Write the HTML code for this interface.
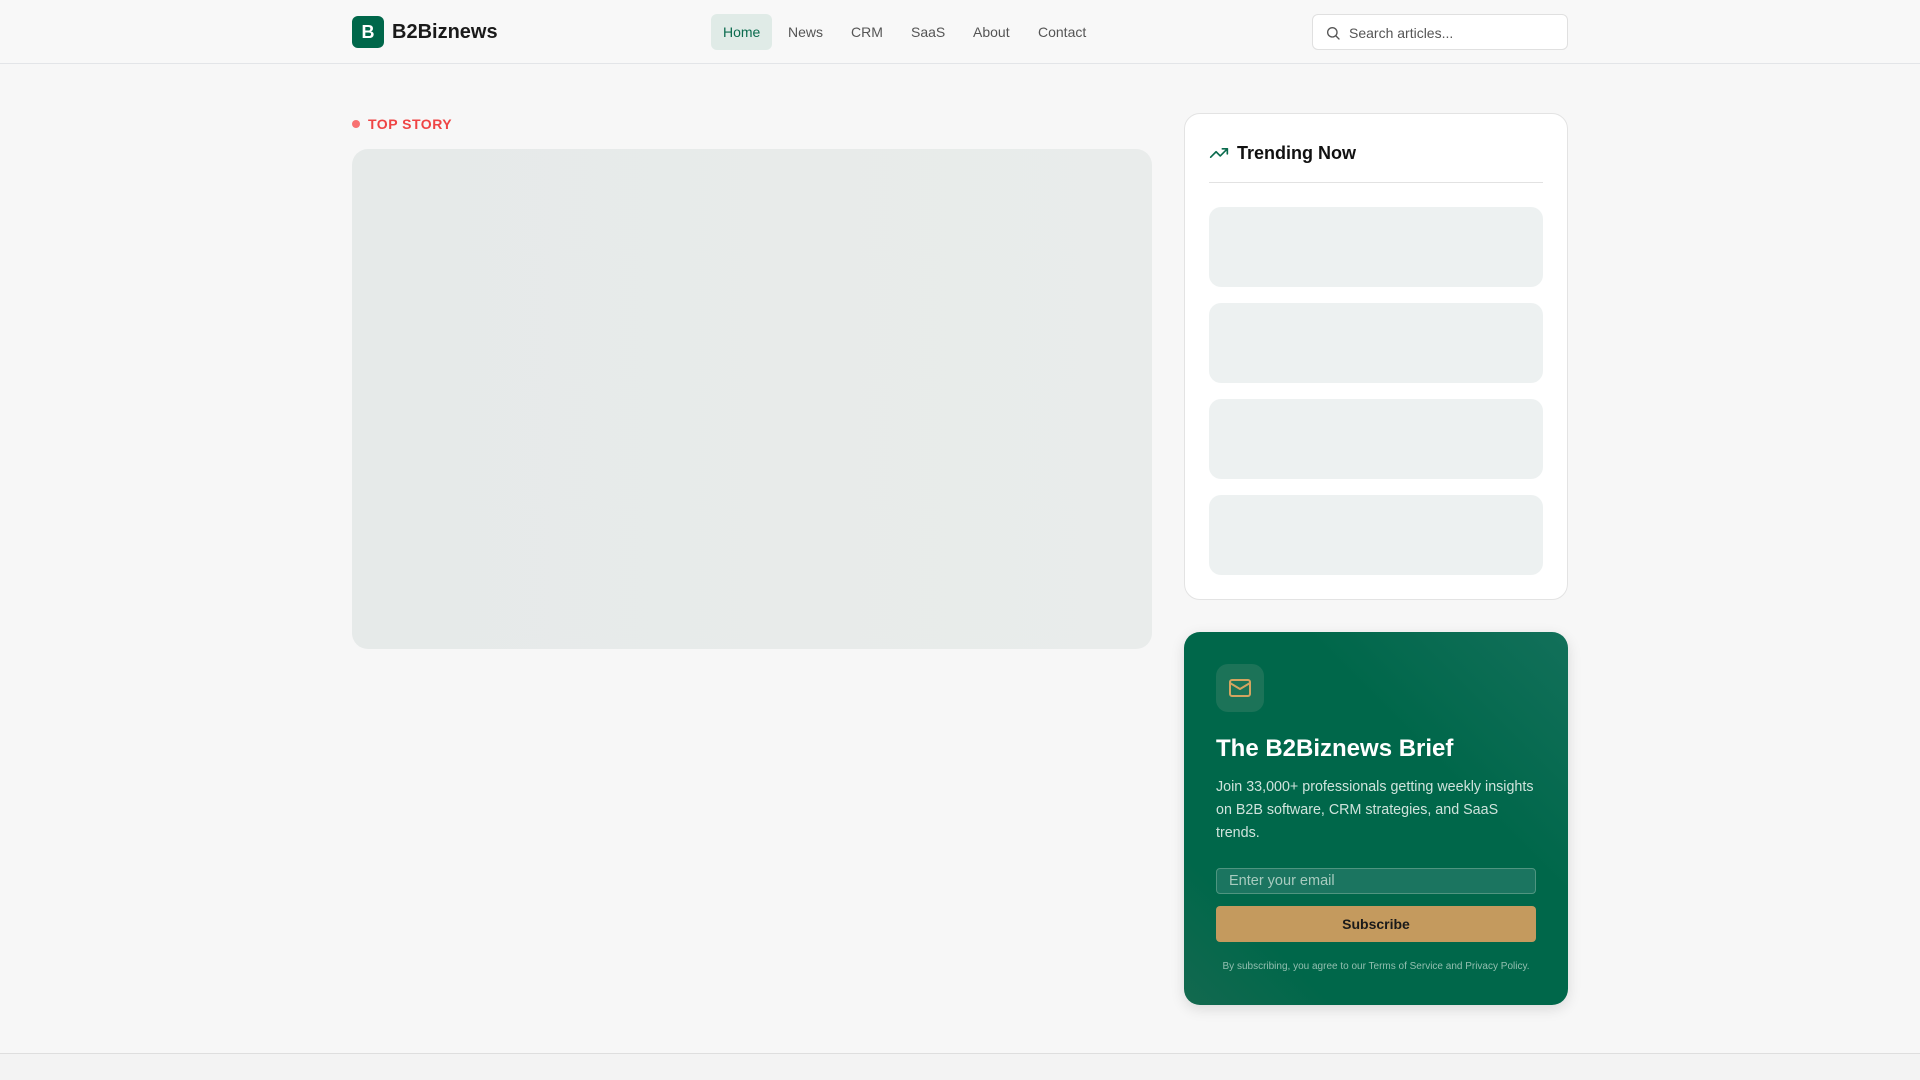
<!DOCTYPE html>
<html><head><meta charset="utf-8"><style>
*{box-sizing:border-box;margin:0;padding:0}
body{width:1920px;height:1080px;background:#f7f7f7;font-family:"Liberation Sans",sans-serif;position:relative;overflow:hidden}
.hdr{position:absolute;left:0;top:0;width:1920px;height:64px;border-bottom:1px solid #e3e5e8;background:#f8f8f8}
.logo{position:absolute;left:352px;top:16px;width:32px;height:32px;border-radius:6px;background:#00674a;color:#fff;font-weight:bold;font-size:18px;text-align:center;line-height:32px}
.brand{position:absolute;left:392px;top:21px;font-size:20px;font-weight:bold;color:#1a1a1a}
.nav a{position:absolute;top:14px;height:36px;line-height:36px;font-size:14px;color:#555;text-decoration:none}
.nav a.act{background:#e0ebe7;color:#0b6b4e;border-radius:6px;padding:0 12px}
.search{position:absolute;left:1312px;top:14px;width:256px;height:36px;border:1px solid #e0e0e0;background:#fff;border-radius:6px}
.search span{position:absolute;left:36px;top:10px;font-size:14px;color:#555}
.ts{position:absolute;left:352px;top:116px;font-size:14px;font-weight:bold;color:#ef4444;letter-spacing:.5px}
.ts i{display:inline-block;width:8px;height:8px;border-radius:50%;background:#f87171;margin-right:8px;vertical-align:1px}
.hero{position:absolute;left:352px;top:149px;width:800px;height:500px;border-radius:16px;background:linear-gradient(90deg,#e6eae9,#e9eceb)}
.trend{position:absolute;left:1184px;top:113px;width:384px;height:487px;background:#fff;border:1px solid #e3e3e3;border-radius:16px}
.trend h3{position:absolute;left:52px;top:29px;font-size:18px;color:#111}
.trend .dv{position:absolute;left:24px;top:68px;width:334px;height:1px;background:#e2e2e2}
.it{position:absolute;left:24px;width:334px;height:80px;border-radius:12px;background:#edf1f1}
.nl{position:absolute;left:1184px;top:632px;width:384px;height:373px;border-radius:16px;background:linear-gradient(225deg,#12705a 0%,#00674a 35%,#00674a 80%,#13694f 100%);box-shadow:0 4px 14px rgba(0,0,0,.12)}
.ic{position:absolute;left:32px;top:32px;width:48px;height:48px;border-radius:12px;background:#1c7358}
.nl h2{position:absolute;left:32px;top:103px;font-size:24px;color:#fff;font-weight:bold}
.nl p{position:absolute;left:32px;top:144px;width:320px;font-size:14.3px;line-height:23px;color:#cfe3dc}
.inp{position:absolute;left:32px;top:236px;width:320px;height:26px;border:1px solid #4f9580;background:#1b7560;border-radius:4px;color:#a8cbbf;font-size:14.5px;padding-left:12px;line-height:24px}
.btn{position:absolute;left:32px;top:274px;width:320px;height:36px;background:#c49a5e;border-radius:4px;text-align:center;line-height:36px;font-weight:bold;font-size:14px;color:#1a1a1a}
.fp{position:absolute;left:0;width:384px;top:329px;text-align:center;font-size:10px;color:#93bfb0}
.foot{position:absolute;left:0;top:1053px;width:1920px;height:27px;border-top:1px solid #dedede;background:#f3f3f3}
</style></head><body>
<div class="hdr">
<div class="logo">B</div><div class="brand">B2Biznews</div>
<div class="nav">
<a class="act" style="left:711px">Home</a>
<a style="left:788px">News</a>
<a style="left:851px">CRM</a>
<a style="left:911px">SaaS</a>
<a style="left:973px">About</a>
<a style="left:1038px">Contact</a>
</div>
<div class="search"><svg style="position:absolute;left:12px;top:10px" width="16" height="16" viewBox="0 0 24 24" fill="none" stroke="#555" stroke-width="2" stroke-linecap="round"><circle cx="11" cy="11" r="7"/><path d="M21 21l-4.3-4.3"/></svg><span>Search articles...</span></div>
</div>
<div class="ts"><i></i>TOP STORY</div>
<div class="hero"></div>
<div class="trend">
<svg style="position:absolute;left:24px;top:29px" width="20" height="20" viewBox="0 0 24 24" fill="none" stroke="#0b6b4e" stroke-width="2" stroke-linecap="round" stroke-linejoin="round"><path d="M22 7l-8.5 8.5-5-5L2 17"/><path d="M16 7h6v6"/></svg>
<h3>Trending Now</h3><div class="dv"></div>
<div class="it" style="top:93px"></div>
<div class="it" style="top:189px"></div>
<div class="it" style="top:285px"></div>
<div class="it" style="top:381px"></div>
</div>
<div class="nl">
<div class="ic"><svg style="position:absolute;left:12px;top:12px" width="24" height="24" viewBox="0 0 24 24" fill="none" stroke="#d4a460" stroke-width="2" stroke-linecap="round" stroke-linejoin="round"><rect x="2" y="4" width="20" height="16" rx="2"/><path d="M22 7l-10 6L2 7"/></svg></div>
<h2>The B2Biznews Brief</h2>
<p>Join 33,000+ professionals getting weekly insights on B2B software, CRM strategies, and SaaS trends.</p>
<div class="inp">Enter your email</div>
<div class="btn">Subscribe</div>
<div class="fp">By subscribing, you agree to our Terms of Service and Privacy Policy.</div>
</div>
<div class="foot"></div>
</body></html>
